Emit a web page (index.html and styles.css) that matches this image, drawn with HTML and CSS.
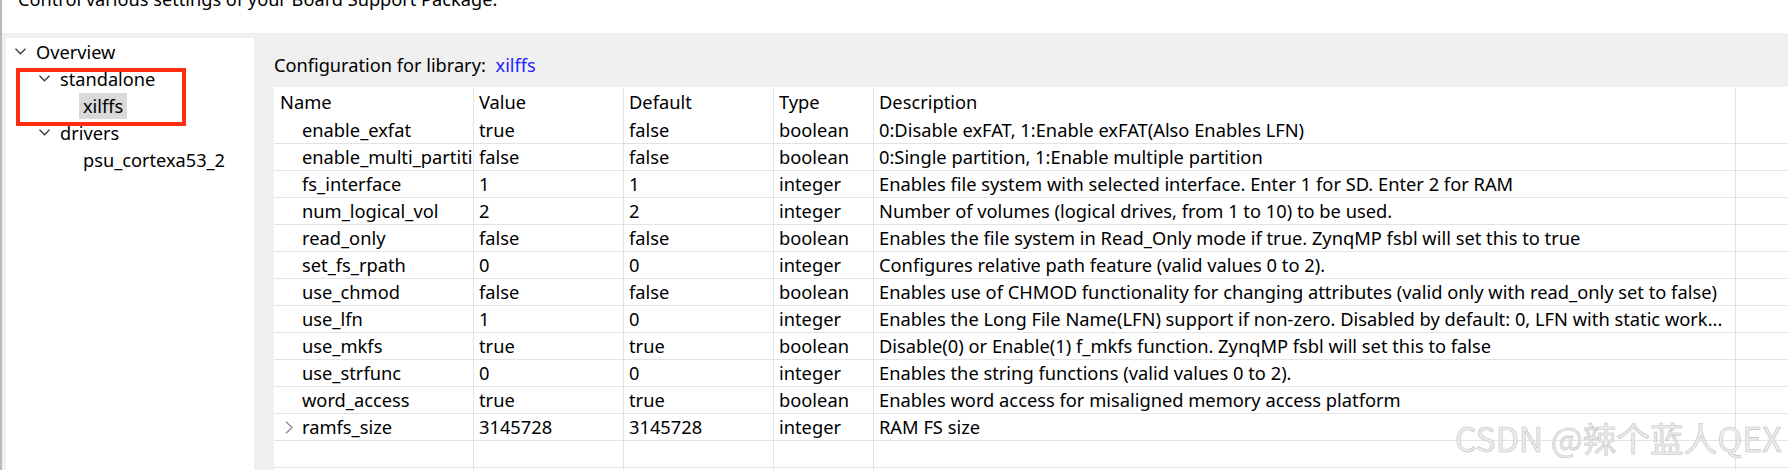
FILE: index.html
```html
<!DOCTYPE html>
<html>
<head>
<meta charset="utf-8">
<link rel="stylesheet" href="styles.css">
</head>
<body>
<div class="window">
  <div class="topbar"><p class="intro">Control various settings of your Board Support Package.</p></div>
  <div class="main">
    <aside class="tree">
      <div class="node l0"><svg class="exp" viewBox="0 0 11 7"><path d="M0.5 0.8 L5.5 5.8 L10.5 0.8"/></svg><span>Overview</span></div>
      <div class="node l1"><svg class="exp" viewBox="0 0 11 7"><path d="M0.5 0.8 L5.5 5.8 L10.5 0.8"/></svg><span>standalone</span></div>
      <div class="node l2"><span class="sel">xilffs</span></div>
      <div class="node l1"><svg class="exp" viewBox="0 0 11 7"><path d="M0.5 0.8 L5.5 5.8 L10.5 0.8"/></svg><span>drivers</span></div>
      <div class="node l2"><span class="leaf">psu_cortexa53_2</span></div>
    </aside>
    <section class="config">
      <div class="caption">Configuration for library: <span class="lib">xilffs</span></div>
      <div class="grid">
        <div class="c h first">Name</div><div class="c h">Value</div><div class="c h">Default</div><div class="c h">Type</div><div class="c h">Description</div><div class="c h"></div>

        <div class="c first name">enable_exfat</div><div class="c">true</div><div class="c">false</div><div class="c">boolean</div><div class="c">0:Disable exFAT, 1:Enable exFAT(Also Enables LFN)</div><div class="c"></div>
        <div class="c first name">enable_multi_partition</div><div class="c">false</div><div class="c">false</div><div class="c">boolean</div><div class="c">0:Single partition, 1:Enable multiple partition</div><div class="c"></div>
        <div class="c first name">fs_interface</div><div class="c">1</div><div class="c">1</div><div class="c">integer</div><div class="c">Enables file system with selected interface. Enter 1 for SD. Enter 2 for RAM</div><div class="c"></div>
        <div class="c first name">num_logical_vol</div><div class="c">2</div><div class="c">2</div><div class="c">integer</div><div class="c">Number of volumes (logical drives, from 1 to 10) to be used.</div><div class="c"></div>
        <div class="c first name">read_only</div><div class="c">false</div><div class="c">false</div><div class="c">boolean</div><div class="c">Enables the file system in Read_Only mode if true. ZynqMP fsbl will set this to true</div><div class="c"></div>
        <div class="c first name">set_fs_rpath</div><div class="c">0</div><div class="c">0</div><div class="c">integer</div><div class="c">Configures relative path feature (valid values 0 to 2).</div><div class="c"></div>
        <div class="c first name">use_chmod</div><div class="c">false</div><div class="c">false</div><div class="c">boolean</div><div class="c">Enables use of CHMOD functionality for changing attributes (valid only with read_only set to false)</div><div class="c"></div>
        <div class="c first name">use_lfn</div><div class="c">1</div><div class="c">0</div><div class="c">integer</div><div class="c">Enables the Long File Name(LFN) support if non-zero. Disabled by default: 0, LFN with static work...</div><div class="c"></div>
        <div class="c first name">use_mkfs</div><div class="c">true</div><div class="c">true</div><div class="c">boolean</div><div class="c">Disable(0) or Enable(1) f_mkfs function. ZynqMP fsbl will set this to false</div><div class="c"></div>
        <div class="c first name">use_strfunc</div><div class="c">0</div><div class="c">0</div><div class="c">integer</div><div class="c">Enables the string functions (valid values 0 to 2).</div><div class="c"></div>
        <div class="c first name">word_access</div><div class="c">true</div><div class="c">true</div><div class="c">boolean</div><div class="c">Enables word access for misaligned memory access platform</div><div class="c"></div>
        <div class="c first name"><svg class="twist" viewBox="0 0 8 13"><path d="M1 0.8 L7 6.5 L1 12.2"/></svg>ramfs_size</div><div class="c">3145728</div><div class="c">3145728</div><div class="c">integer</div><div class="c">RAM FS size</div><div class="c"></div>
        <div class="c first"></div><div class="c"></div><div class="c"></div><div class="c"></div><div class="c"></div><div class="c"></div>
        <div class="c first"></div><div class="c"></div><div class="c"></div><div class="c"></div><div class="c"></div><div class="c"></div>
      </div>
    </section>
  </div>
  <div class="annot"></div>
  <div class="watermark">CSDN @辣个蓝人QEX</div>
</div>
</body>
</html>
```

FILE: styles.css
```css
* { box-sizing: border-box; }
html, body { margin: 0; padding: 0; }
body {
  width: 1788px;
  height: 470px;
  overflow: hidden;
  background: #fff;
  color: #000;
  font-family: "Noto Sans", "Noto Sans CJK SC", sans-serif;
  font-size: 18.2px;
}
.window {
  position: relative;
  height: 470px;
  overflow: hidden;
  border-left: 2px solid #b9b9b9;
  display: flex;
  flex-direction: column;
}
.topbar {
  height: 33px;
  flex: none;
  background: #fff;
  padding-left: 16px;
  overflow: hidden;
}
.intro {
  margin: -10px 0 0;
  line-height: 18px;
  white-space: nowrap;
}
.main {
  flex: 1;
  min-height: 0;
  overflow: hidden;
  display: flex;
  gap: 20px;
  background: #f0f0f0;
  padding: 5px 0 0 4px;
}
.tree {
  width: 248px;
  flex: none;
  background: #fff;
}
.node {
  height: 27px;
  display: flex;
  align-items: center;
  white-space: nowrap;
}
.node.l0 { padding-left: 9px; }
.node.l1 { padding-left: 33px; }
.node.l2 { padding-left: 73px; }
.exp {
  width: 11px;
  height: 7px;
  margin-right: 10px;
  fill: none;
  stroke: #3a3a3a;
  stroke-width: 1.3;
}
.sel, .leaf {
  padding: 0 4px;
  height: 26px;
  line-height: 26px;
}
.sel { background: #d9d9d9; }
.config {
  flex: 1;
  min-width: 0;
  padding-top: 14px;
}
.caption {
  height: 27px;
  line-height: 27px;
  margin-bottom: 8px;
  white-space: nowrap;
}
.lib { color: #1f1fff; margin-left: 5px; }
.grid {
  display: grid;
  grid-template-columns: 199px 150px 150px 100px 862px 1fr;
  grid-template-rows: 30px;
  grid-auto-rows: 27px;
  background: #fff;
  font-size: 18.3px;
}
.c {
  border-left: 1px solid #e3e3e3;
  border-bottom: 1px solid #e3e3e3;
  padding-left: 5px;
  line-height: 26px;
  white-space: nowrap;
  overflow: hidden;
}
.c.first { border-left: none; padding-left: 6px; }
.c.name { padding-left: 28px; position: relative; }
.c.h { border-bottom: none; line-height: 30px; }
.twist {
  position: absolute;
  left: 11px;
  top: 7px;
  width: 8px;
  height: 13px;
  fill: none;
  stroke: #8a8a8a;
  stroke-width: 1.2;
}
.annot {
  position: absolute;
  left: 14px;
  top: 68px;
  width: 170px;
  height: 58px;
  border: 4px solid #ff2c10;
}
.watermark {
  position: absolute;
  left: 1453px;
  top: 416px;
  font-family: "Noto Sans CJK SC", sans-serif;
  font-size: 33.7px;
  line-height: 44px;
  white-space: nowrap;
  color: #ededed;
  -webkit-text-stroke: 0.6px #c2c2c2;
}
```
